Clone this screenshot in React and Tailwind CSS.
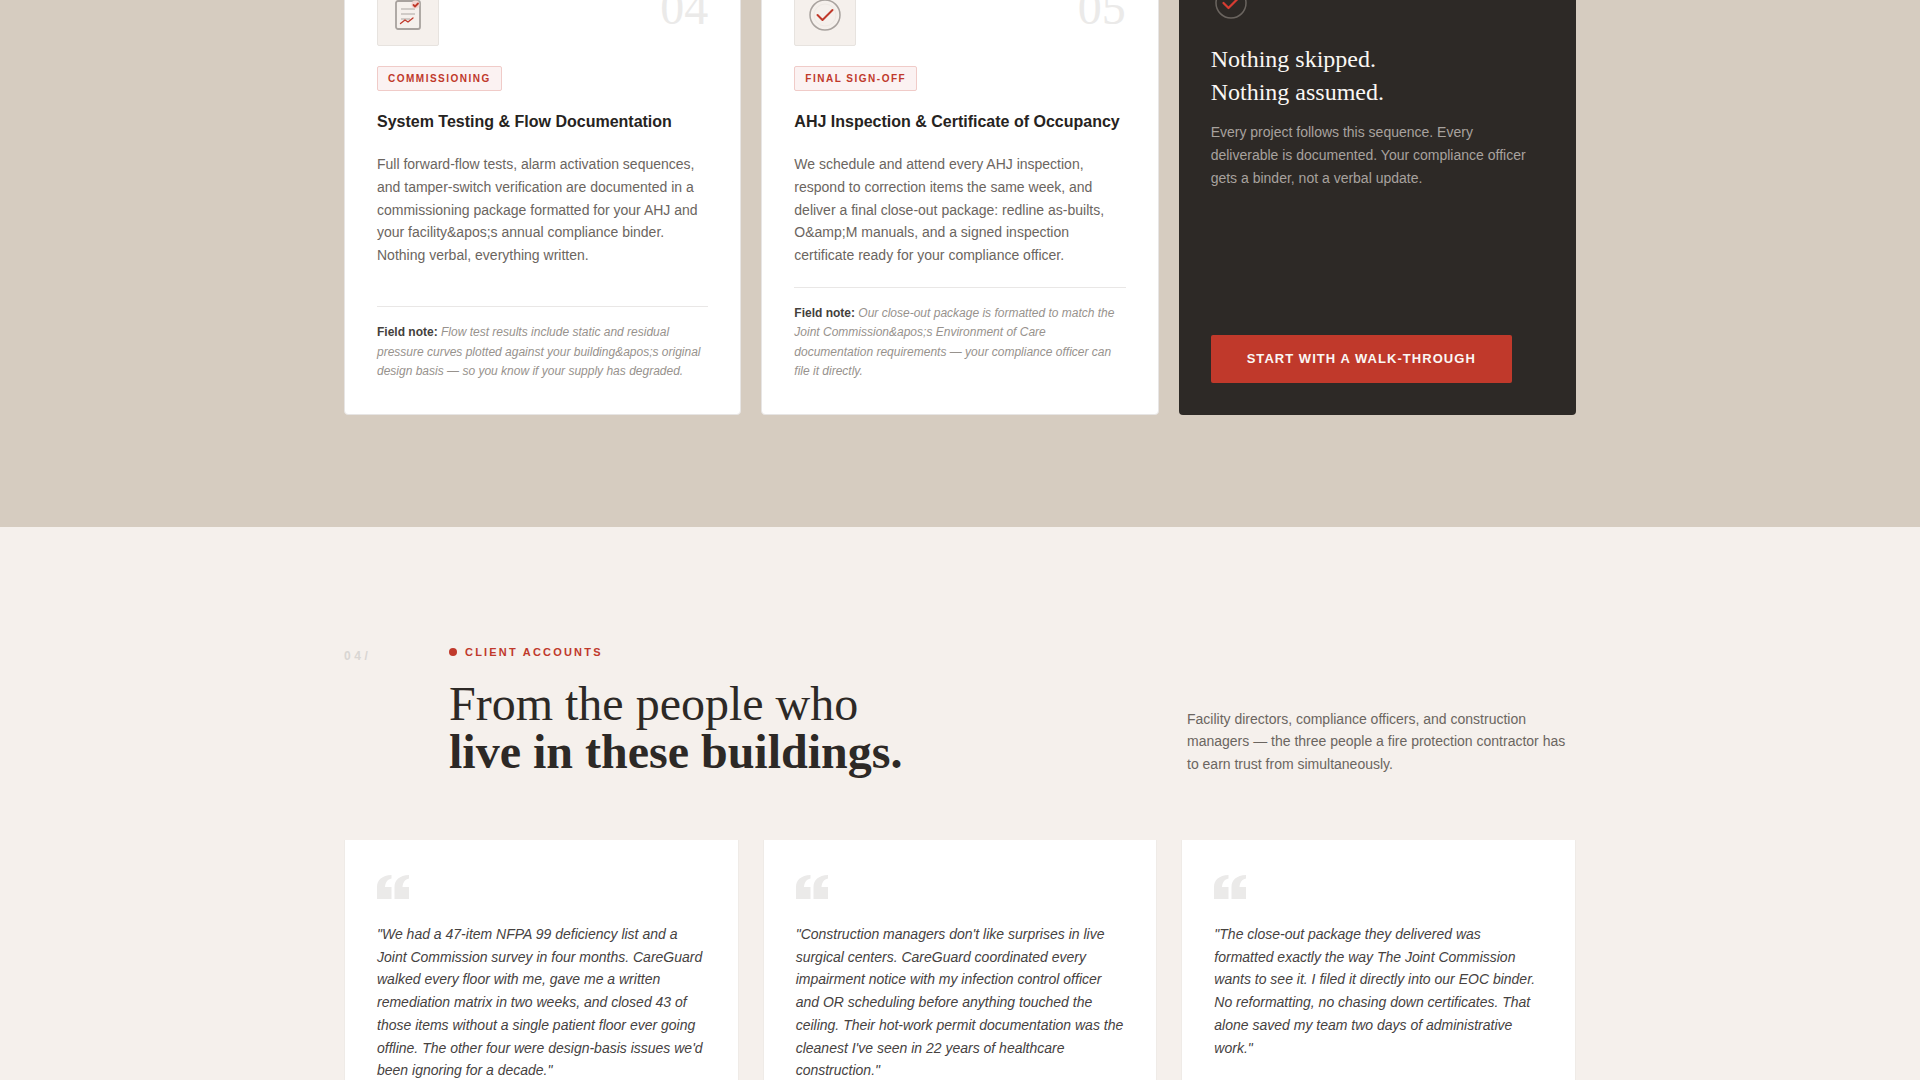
import React from 'react';

const steps = [
  {
    number: '04',
    tag: 'Commissioning',
    title: 'System Testing & Flow Documentation',
    body: 'Full forward-flow tests, alarm activation sequences, and tamper-switch verification are documented in a commissioning package formatted for your AHJ and your facility&apos;s annual compliance binder. Nothing verbal, everything written.',
    note: 'Flow test results include static and residual pressure curves plotted against your building&apos;s original design basis — so you know if your supply has degraded.',
    Icon: ReportIcon,
  },
  {
    number: '05',
    tag: 'Final Sign-Off',
    title: 'AHJ Inspection & Certificate of Occupancy',
    body: 'We schedule and attend every AHJ inspection, respond to correction items the same week, and deliver a final close-out package: redline as-builts, O&amp;M manuals, and a signed inspection certificate ready for your compliance officer.',
    note: 'Our close-out package is formatted to match the Joint Commission&apos;s Environment of Care documentation requirements — your compliance officer can file it directly.',
    Icon: ApprovedIcon,
  },
];

const quotes = [
  '"We had a 47-item NFPA 99 deficiency list and a Joint Commission survey in four months. CareGuard walked every floor with me, gave me a written remediation matrix in two weeks, and closed 43 of those items without a single patient floor ever going offline. The other four were design-basis issues we\'d been ignoring for a decade."',
  '"Construction managers don\'t like surprises in live surgical centers. CareGuard coordinated every impairment notice with my infection control officer and OR scheduling before anything touched the ceiling. Their hot-work permit documentation was the cleanest I\'ve seen in 22 years of healthcare construction."',
  '"The close-out package they delivered was formatted exactly the way The Joint Commission wants to see it. I filed it directly into our EOC binder. No reformatting, no chasing down certificates. That alone saved my team two days of administrative work."',
];

function ReportIcon() {
  return (
    <svg width="40" height="40" viewBox="0 0 40 40" fill="none" aria-hidden="true">
      <rect x="8" y="6" width="24" height="28" rx="2" stroke="#A8A29E" strokeWidth="1.8" />
      <path d="M13 14h14M13 19h14M13 24h9" stroke="#C4BFBA" strokeWidth="1.5" />
      <path d="M12.5 28.5l4.5-3.5 3 2 5-4" stroke="#C0392B" strokeWidth="1.3" strokeLinecap="round" strokeLinejoin="round" />
      <circle cx="27.5" cy="9.5" r="4" fill="#F3D5D1" />
      <path d="M25.5 10l1.5 1.5 3-3" stroke="#C0392B" strokeWidth="1.8" strokeLinecap="round" strokeLinejoin="round" />
    </svg>
  );
}

function ApprovedIcon() {
  return (
    <svg width="40" height="40" viewBox="0 0 40 40" fill="none" aria-hidden="true">
      <circle cx="20" cy="20" r="15" stroke="#A8A29E" strokeWidth="1.5" />
      <circle cx="20" cy="20" r="11" stroke="#EEE9E4" strokeWidth="1" />
      <path d="M12.5 20l5 5 10-10" stroke="#C0392B" strokeWidth="2" strokeLinecap="round" strokeLinejoin="round" />
    </svg>
  );
}

function QuoteMark() {
  return (
    <svg width="32" height="24" viewBox="0 0 32 24" fill="#EBEAE9" aria-hidden="true" className="mb-6 block">
      <path d="M0 24V12C0 5 5 .5 14.5 0v3.5C10.5 4.5 8.5 7 8 12h6.5v12zM17.5 24V12C17.5 5 22.5 .5 32 0v3.5C28 4.5 26 7 25.5 12H32v12z" />
    </svg>
  );
}

function StepCard({ step }) {
  const { Icon } = step;
  return (
    <article className="flex flex-col gap-5 rounded border border-[#e7e5e4] bg-white p-8">
      <div className="flex items-start justify-between">
        <div className="rounded-xs border border-[#e7e3df] bg-[#f5f0ec] p-[10px]">
          <Icon />
        </div>
        <span className="font-['Liberation_Serif',serif] text-5xl leading-none text-[#ebeae9]">{step.number}</span>
      </div>
      <span className="self-start rounded-xs border border-[#f0cbc8] bg-[#fbf2f2] px-[10px] py-1 text-[10px] leading-[15px] font-bold tracking-[0.15em] text-[#c0392b] uppercase">
        {step.tag}
      </span>
      <h3 className="text-base leading-snug font-bold text-[#262321]">{step.title}</h3>
      <p className="text-sm leading-relaxed text-[#6b6560]">{step.body}</p>
      <p className="mt-auto border-t border-[#e9e7e6] pt-4 text-xs leading-relaxed text-[#97928d] italic">
        <strong className="font-bold text-[#443f3c] not-italic">Field note:</strong> {step.note}
      </p>
    </article>
  );
}

export default function App() {
  return (
    <main className="h-screen overflow-hidden bg-[#f5f0ec] font-['Liberation_Sans',Arial,sans-serif]">
      {/* Process */}
      <section className="bg-[#d6ccc0] px-6 pb-28">
        <div className="mx-auto -mt-[49px] grid max-w-[1232px] grid-cols-3 gap-5">
          {steps.map((step) => (
            <StepCard key={step.number} step={step} />
          ))}
          <aside className="flex flex-col items-start justify-between rounded bg-[#2d2926] p-8">
            <div>
              <svg width="40" height="40" viewBox="0 0 40 40" fill="none" aria-hidden="true" className="mb-5 block">
                <circle cx="20" cy="20" r="15" stroke="#6B6560" strokeWidth="1.5" />
                <path d="M12.5 20l5 5 10-10" stroke="#D63C32" strokeWidth="2.2" strokeLinecap="round" strokeLinejoin="round" />
              </svg>
              <h3 className="mb-3 font-['Liberation_Serif',serif] text-2xl leading-snug text-[#faf7f4]">
                Nothing skipped.
                <br />
                Nothing assumed.
              </h3>
              <p className="text-sm leading-relaxed text-[#a8a29e]">
                Every project follows this sequence. Every deliverable is documented. Your compliance officer gets a
                binder, not a verbal update.
              </p>
            </div>
            <a
              href="#contact"
              className="flex h-12 items-center rounded-xs bg-[#c0392b] px-9 text-[13px] font-bold tracking-[0.08em] text-[#faf7f4] uppercase"
            >
              Start with a walk-through
            </a>
          </aside>
        </div>
      </section>

      {/* Client accounts */}
      <section className="px-6 pt-28">
        <div className="mx-auto max-w-[1232px]">
          <header className="mb-16 grid grid-cols-[81px_1fr] gap-6">
            <span className="pt-2 text-xs leading-[18px] font-bold tracking-[0.3em] text-[#d9d6d3]">04/</span>
            <div className="flex items-end justify-between">
              <div>
                <p className="mb-5 flex items-center gap-2 pt-[5px] text-[11px] leading-4 font-bold tracking-[0.2em] text-[#c0392b] uppercase">
                  <span className="size-2 rounded-full bg-[#c0392b]" />
                  Client Accounts
                </p>
                <h2 className="font-['Liberation_Serif',serif] text-5xl leading-none text-[#2d2926]">
                  From the people who
                  <br />
                  <strong className="font-bold">live in these buildings.</strong>
                </h2>
              </div>
              <p className="w-[389px] text-sm leading-relaxed text-[#6b6560]">
                Facility directors, compliance officers, and construction managers — the three people a fire
                protection contractor has to earn trust from simultaneously.
              </p>
            </div>
          </header>

          <div className="grid grid-cols-3 gap-6">
            {quotes.map((quote) => (
              <blockquote key={quote} className="border-x border-b border-[#efebe7] bg-white px-8 pt-[35px] pb-8">
                <QuoteMark />
                <p className="text-sm leading-relaxed text-[#46423f] italic">{quote}</p>
              </blockquote>
            ))}
          </div>
        </div>
      </section>
    </main>
  );
}
